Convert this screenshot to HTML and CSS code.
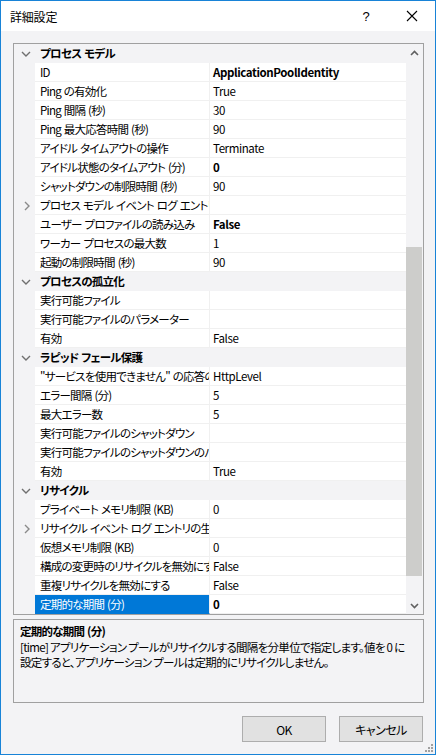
FILE: index.html
```html
<!DOCTYPE html>
<html lang="ja">
<head>
<meta charset="utf-8">
<title>詳細設定</title>
<link rel="stylesheet" href="styles.css">
</head>
<body>
<div class="window">
  <div class="titlebar">
    <div class="title">詳細設定</div>
    <div class="help">?</div>
    <div class="close"><svg width="12" height="12" viewBox="0 0 12 12"><path d="M1 1L11 11M11 1L1 11" stroke="#000" stroke-width="1.1" fill="none"/></svg></div>
  </div>
  <div class="content">
    <div class="grid">
      <div class="rows">
        <div class="cat"><div class="gut"><svg class="chev" width="10" height="6" viewBox="0 0 10 6"><path d="M1 1L5 5L9 1" stroke="#707070" stroke-width="1.4" fill="none"/></svg></div><div class="cat-t">プロセス モデル</div></div>
        <div class="row"><div class="gut"></div><div class="lbl">ID</div><div class="val b">ApplicationPoolIdentity</div></div>
        <div class="row"><div class="gut"></div><div class="lbl">Ping の有効化</div><div class="val">True</div></div>
        <div class="row"><div class="gut"></div><div class="lbl">Ping 間隔 (秒)</div><div class="val">30</div></div>
        <div class="row"><div class="gut"></div><div class="lbl">Ping 最大応答時間 (秒)</div><div class="val">90</div></div>
        <div class="row"><div class="gut"></div><div class="lbl">アイドル タイムアウトの操作</div><div class="val">Terminate</div></div>
        <div class="row"><div class="gut"></div><div class="lbl">アイドル状態のタイムアウト (分)</div><div class="val b">0</div></div>
        <div class="row"><div class="gut"></div><div class="lbl">シャットダウンの制限時間 (秒)</div><div class="val">90</div></div>
        <div class="row"><div class="gut"><svg class="chev-r" width="6" height="10" viewBox="0 0 6 10"><path d="M1 1L5 5L1 9" stroke="#8a8a8a" stroke-width="1.4" fill="none"/></svg></div><div class="lbl">プロセス モデル イベント ログ エントリの生成</div><div class="val"></div></div>
        <div class="row"><div class="gut"></div><div class="lbl">ユーザー プロファイルの読み込み</div><div class="val b">False</div></div>
        <div class="row"><div class="gut"></div><div class="lbl">ワーカー プロセスの最大数</div><div class="val">1</div></div>
        <div class="row"><div class="gut"></div><div class="lbl">起動の制限時間 (秒)</div><div class="val">90</div></div>
        <div class="cat"><div class="gut"><svg class="chev" width="10" height="6" viewBox="0 0 10 6"><path d="M1 1L5 5L9 1" stroke="#707070" stroke-width="1.4" fill="none"/></svg></div><div class="cat-t">プロセスの孤立化</div></div>
        <div class="row"><div class="gut"></div><div class="lbl">実行可能ファイル</div><div class="val"></div></div>
        <div class="row"><div class="gut"></div><div class="lbl">実行可能ファイルのパラメーター</div><div class="val"></div></div>
        <div class="row"><div class="gut"></div><div class="lbl">有効</div><div class="val">False</div></div>
        <div class="cat"><div class="gut"><svg class="chev" width="10" height="6" viewBox="0 0 10 6"><path d="M1 1L5 5L9 1" stroke="#707070" stroke-width="1.4" fill="none"/></svg></div><div class="cat-t">ラピッド フェール保護</div></div>
        <div class="row"><div class="gut"></div><div class="lbl">"サービスを使用できません" の応答の種類</div><div class="val">HttpLevel</div></div>
        <div class="row"><div class="gut"></div><div class="lbl">エラー間隔 (分)</div><div class="val">5</div></div>
        <div class="row"><div class="gut"></div><div class="lbl">最大エラー数</div><div class="val">5</div></div>
        <div class="row"><div class="gut"></div><div class="lbl">実行可能ファイルのシャットダウン</div><div class="val"></div></div>
        <div class="row"><div class="gut"></div><div class="lbl">実行可能ファイルのシャットダウンのパラメーター</div><div class="val"></div></div>
        <div class="row"><div class="gut"></div><div class="lbl">有効</div><div class="val">True</div></div>
        <div class="cat"><div class="gut"><svg class="chev" width="10" height="6" viewBox="0 0 10 6"><path d="M1 1L5 5L9 1" stroke="#707070" stroke-width="1.4" fill="none"/></svg></div><div class="cat-t">リサイクル</div></div>
        <div class="row"><div class="gut"></div><div class="lbl">プライベート メモリ制限 (KB)</div><div class="val">0</div></div>
        <div class="row"><div class="gut"><svg class="chev-r" width="6" height="10" viewBox="0 0 6 10"><path d="M1 1L5 5L1 9" stroke="#8a8a8a" stroke-width="1.4" fill="none"/></svg></div><div class="lbl">リサイクル イベント ログ エントリの生成</div><div class="val"></div></div>
        <div class="row"><div class="gut"></div><div class="lbl">仮想メモリ制限 (KB)</div><div class="val">0</div></div>
        <div class="row"><div class="gut"></div><div class="lbl">構成の変更時のリサイクルを無効にする</div><div class="val">False</div></div>
        <div class="row"><div class="gut"></div><div class="lbl">重複リサイクルを無効にする</div><div class="val">False</div></div>
        <div class="row sel"><div class="gut"></div><div class="lbl">定期的な期間 (分)</div><div class="val b">0</div></div>
      </div>
      <div class="scrollbar">
        <div class="arrow"><svg width="9" height="6" viewBox="0 0 9 6"><path d="M1 5L4.5 1.5L8 5" stroke="#606060" stroke-width="1.6" fill="none"/></svg></div>
        <div class="track"><div class="thumb"></div></div>
        <div class="arrow"><svg width="9" height="6" viewBox="0 0 9 6"><path d="M1 1L4.5 4.5L8 1" stroke="#606060" stroke-width="1.6" fill="none"/></svg></div>
      </div>
    </div>
    <div class="desc">
      <div class="desc-t">定期的な期間 (分)</div>
      <div class="desc-b">[time] アプリケーション プールがリサイクルする間隔を分単位で指定します。値を 0 に<br>設定すると、アプリケーション プールは定期的にリサイクルしません。</div>
    </div>
    <div class="buttons">
      <div class="btn">OK</div>
      <div class="btn">キャンセル</div>
    </div>
  </div>
  <svg class="grip" width="8" height="8" viewBox="0 0 8 8"><g fill="#a0a0a0"><rect x="6" y="0" width="2" height="2"/><rect x="3" y="3" width="2" height="2"/><rect x="6" y="3" width="2" height="2"/><rect x="0" y="6" width="2" height="2"/><rect x="3" y="6" width="2" height="2"/><rect x="6" y="6" width="2" height="2"/></g></svg>
</div>
</body>
</html>
```
FILE: styles.css
```css
* { box-sizing: border-box; }
html, body { margin: 0; padding: 0; }
body {
  font-family: "Noto Sans CJK JP", "Noto Sans", sans-serif;
  font-size: 11.5px;
  letter-spacing: -0.75px;
  word-spacing: 1px;
  color: #000;
  font-feature-settings: "palt";
}
.window {
  position: relative;
  width: 436px;
  height: 755px;
  border: 1px solid #1883d7;
  background: #f3f3f5;
  display: flex;
  flex-direction: column;
}
.titlebar {
  height: 30px;
  background: #fff;
  display: flex;
  align-items: center;
}
.title {
  flex: 1;
  padding-left: 9px;
  font-size: 12px;
  letter-spacing: -0.2px;
}
.help {
  width: 46px;
  text-align: center;
  font-family: "Liberation Sans", sans-serif;
  font-size: 13px;
  letter-spacing: 0;
}
.close {
  width: 46px;
  height: 30px;
  display: flex;
  align-items: center;
  justify-content: center;
}
.content {
  flex: 1;
  padding: 12px 11px 0 12px;
  display: flex;
  flex-direction: column;
}
.grid {
  width: 411px;
  height: 572px;
  border: 1px solid #a0a0a0;
  display: flex;
  background: #f3f3f5;
}
.rows {
  width: 392px;
  overflow: hidden;
}
.row, .cat {
  display: flex;
  height: 19px;
}
.gut {
  width: 21px;
  flex: none;
  display: flex;
  align-items: center;
  justify-content: center;
}
.chev { margin-left: 2px; }
.chev-r { margin-left: 4px; }
.cat-t {
  font-weight: bold;
  line-height: 19px;
  padding-left: 5px;
}
.lbl, .val {
  background: #fff;
  border-bottom: 1px solid #f0f0f0;
  line-height: 18px;
  white-space: nowrap;
  overflow: hidden;
}
.lbl {
  width: 175px;
  flex: none;
  padding-left: 5px;
  border-right: 1px solid #f0f0f0;
}
.val {
  flex: 1;
  padding-left: 3px;
  letter-spacing: -0.4px;
}
.b { font-weight: bold; }
.sel .lbl {
  background: #0078d7;
  color: #fff;
  border-bottom-color: #0078d7;
}
.scrollbar {
  width: 17px;
  display: flex;
  flex-direction: column;
  background: #f3f3f5;
}
.arrow {
  height: 17px;
  display: flex;
  align-items: center;
  justify-content: center;
}
.track { flex: 1; }
.thumb {
  margin: 186px 1px 0 0;
  height: 329px;
  background: #cdcdcb;
}
.desc {
  margin-top: 4px;
  width: 411px;
  height: 84px;
  border: 1px solid #a0a0a0;
  padding: 3px 6px;
}
.desc-t {
  font-weight: bold;
  line-height: 16px;
}
.desc-b {
  line-height: 15px;
  margin-top: 1px;
  white-space: nowrap;
  letter-spacing: -0.7px;
  word-spacing: 0;
}
.buttons {
  display: flex;
  justify-content: flex-end;
  gap: 13px;
  margin-top: 13px;
  padding-right: 1px;
}
.btn {
  width: 84px;
  height: 26px;
  background: #e1e1e1;
  border: 1px solid #adadad;
  display: flex;
  align-items: center;
  justify-content: center;
  font-size: 12px;
  letter-spacing: -0.5px;
}
.grip {
  position: absolute;
  right: 2px;
  bottom: 2px;
}
```
